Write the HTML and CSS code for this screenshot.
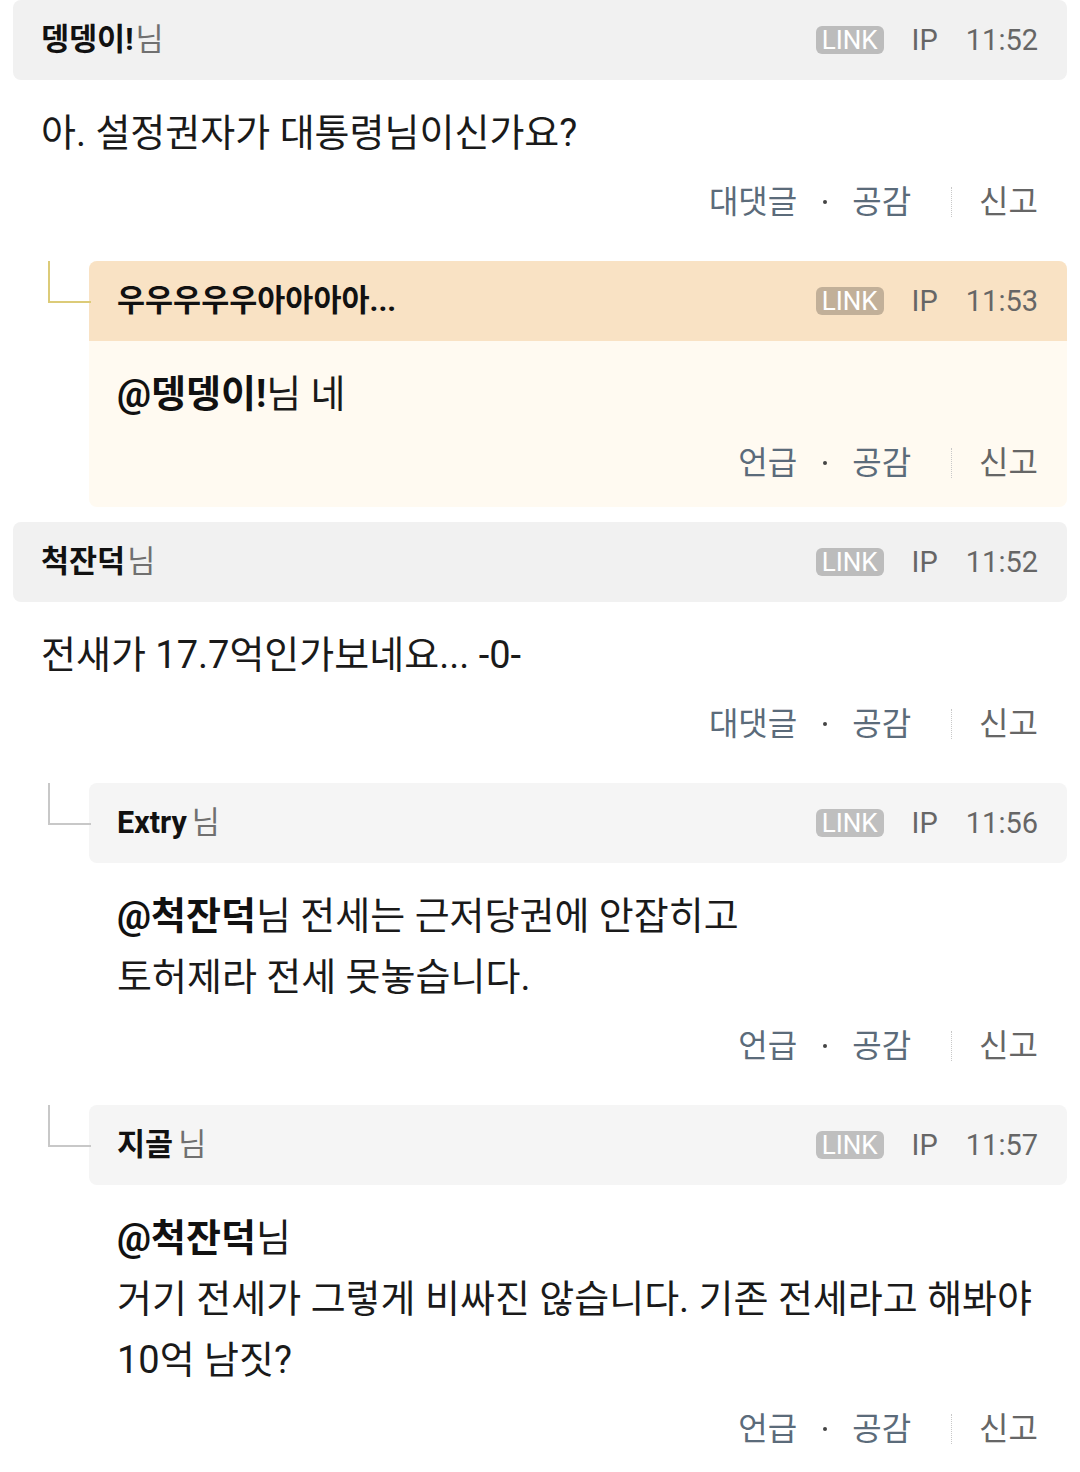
FILE: index.html
```html
<!DOCTYPE html>
<html lang="ko">
<head>
<meta charset="utf-8">
<title>댓글</title>
<link rel="stylesheet" href="styles.css">
</head>
<body>
<div class="thread">

  <article class="comment">
    <header class="c-head">
      <span class="nick"><b>뎅뎅이!</b><span class="sfx">님</span></span>
      <span class="meta"><span class="badge">LINK</span><span class="ip">IP</span><span class="time">11:52</span></span>
    </header>
    <div class="c-body">아. 설정권자가 대통령님이신가요?</div>
    <div class="c-actions"><span class="act">대댓글</span><span class="dot"></span><span class="act">공감</span><span class="sep"></span><span class="report">신고</span></div>
  </article>

  <article class="comment reply hl">
    <header class="c-head">
      <span class="nick"><b>우우우우우아아아아...</b></span>
      <span class="meta"><span class="badge">LINK</span><span class="ip">IP</span><span class="time">11:53</span></span>
    </header>
    <div class="c-body"><b>@뎅뎅이!</b>님 네</div>
    <div class="c-actions"><span class="act">언급</span><span class="dot"></span><span class="act">공감</span><span class="sep"></span><span class="report">신고</span></div>
  </article>

  <article class="comment">
    <header class="c-head">
      <span class="nick"><b>척잔덕</b><span class="sfx">님</span></span>
      <span class="meta"><span class="badge">LINK</span><span class="ip">IP</span><span class="time">11:52</span></span>
    </header>
    <div class="c-body">전새가 17.7억인가보네요... -0-</div>
    <div class="c-actions"><span class="act">대댓글</span><span class="dot"></span><span class="act">공감</span><span class="sep"></span><span class="report">신고</span></div>
  </article>

  <article class="comment reply">
    <header class="c-head">
      <span class="nick"><b>Extry</b><span class="sfx sp">님</span></span>
      <span class="meta"><span class="badge">LINK</span><span class="ip">IP</span><span class="time">11:56</span></span>
    </header>
    <div class="c-body"><b>@척잔덕</b>님 전세는 근저당권에 안잡히고<br>토허제라 전세 못놓습니다.</div>
    <div class="c-actions"><span class="act">언급</span><span class="dot"></span><span class="act">공감</span><span class="sep"></span><span class="report">신고</span></div>
  </article>

  <article class="comment reply">
    <header class="c-head">
      <span class="nick"><b>지골</b><span class="sfx sp">님</span></span>
      <span class="meta"><span class="badge">LINK</span><span class="ip">IP</span><span class="time">11:57</span></span>
    </header>
    <div class="c-body"><b>@척잔덕</b>님<br>거기 전세가 그렇게 비싸진 않습니다. 기존 전세라고 해봐야<br>10억 남짓?</div>
    <div class="c-actions"><span class="act">언급</span><span class="dot"></span><span class="act">공감</span><span class="sep"></span><span class="report">신고</span></div>
  </article>

</div>
</body>
</html>
```

FILE: styles.css
```css
* { box-sizing: border-box; }

html, body {
  margin: 0;
  padding: 0;
  background: #ffffff;
}

body {
  font-family: Roboto, "Noto Sans CJK KR", "Noto Sans", sans-serif;
  color: #1a1a1a;
}

.thread {
  padding: 0 13px;
  display: flex;
  flex-direction: column;
}

.comment {
  position: relative;
  margin-bottom: 15px;
  padding-bottom: 16px;
  border-radius: 8px;
}

.c-head {
  height: 80px;
  padding: 0 29px 0 28px;
  display: flex;
  align-items: center;
  justify-content: space-between;
  background: #f1f1f1;
  border-radius: 8px;
}

.nick {
  font-size: 30.5px;
  line-height: 36px;
  color: #111111;
  white-space: nowrap;
}

.nick b {
  font-weight: 700;
}

.sfx {
  color: #707070;
  font-weight: 400;
  margin-left: 2px;
}

.sfx.sp {
  margin-left: 5px;
}

.meta {
  display: flex;
  align-items: center;
  font-size: 29px;
  color: #666666;
  line-height: 36px;
}

.badge {
  display: inline-block;
  height: 28px;
  line-height: 28px;
  padding: 0 6px;
  border-radius: 6px;
  background: rgba(0, 0, 0, 0.22);
  color: #ffffff;
  font-size: 26px;
  margin-right: 28px;
}

.ip {
  margin-right: 28px;
}

.c-body {
  padding: 23px 29px 0 28px;
  font-size: 38px;
  line-height: 61px;
  color: #1a1a1a;
  white-space: nowrap;
}

.c-body b {
  font-weight: 700;
  color: #111111;
}

.c-actions {
  margin-top: 10px;
  height: 56px;
  padding-right: 29px;
  display: flex;
  align-items: center;
  justify-content: flex-end;
  font-size: 32px;
  line-height: 56px;
}

.act {
  color: #5b6b7a;
}

.report {
  color: #666666;
}

.dot {
  width: 55px;
  height: 56px;
  display: flex;
  align-items: center;
  justify-content: center;
}

.dot::after {
  content: "";
  width: 4px;
  height: 4px;
  border-radius: 50%;
  background: #444444;
}

.sep {
  width: 0;
  height: 30px;
  border-left: 1px dotted #c8c8c8;
  margin: 0 27px 0 40px;
}

/* replies */
.reply {
  margin-left: 76px;
}

.reply::before {
  content: "";
  position: absolute;
  left: -41px;
  top: 0;
  width: 41px;
  height: 40px;
  border-left: 2px solid #c8c8c8;
  border-bottom: 2px solid #c8c8c8;
}

.reply .c-head {
  background: #f5f5f5;
}

.reply.hl {
  background: #fffaf1;
}

.reply.hl .c-head {
  background: #f9e2c4;
  border-radius: 8px 8px 0 0;
}

.reply.hl::before {
  border-color: #dccb78;
}
```
